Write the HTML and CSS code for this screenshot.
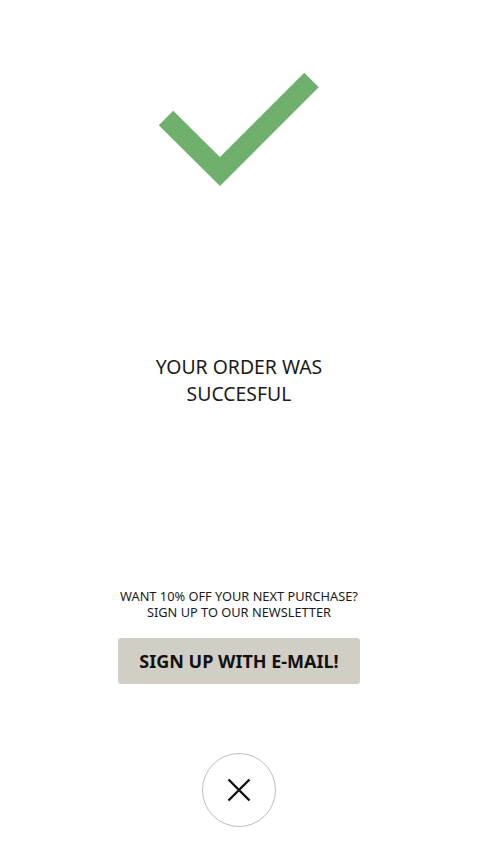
FILE: index.html
```html
<!DOCTYPE html>
<html>
<head>
<meta charset="utf-8">
<link rel="stylesheet" href="styles.css">
</head>
<body>
<main class="page">
  <svg class="check" width="162" height="116" viewBox="158 72 162 116">
    <polyline points="166,118 220,171.5 311.5,80" fill="none" stroke="#6fb06d" stroke-width="20.5" stroke-linecap="butt" stroke-linejoin="miter"/>
  </svg>
  <h1 class="title">YOUR ORDER WAS<br>SUCCESFUL</h1>
  <p class="promo">WANT 10% OFF YOUR NEXT PURCHASE?<br>SIGN UP TO OUR NEWSLETTER</p>
  <button class="signup">SIGN UP WITH E-MAIL!</button>
  <button class="close" aria-label="Close">
    <svg width="24" height="24" viewBox="0 0 24 24">
      <path d="M1.5 1.5 L22.5 22.5 M22.5 1.5 L1.5 22.5" stroke="#111" stroke-width="2.4" fill="none"/>
    </svg>
  </button>
</main>
</body>
</html>
```
FILE: styles.css
```css
html, body {
  margin: 0;
  padding: 0;
  background: #fff;
}
.page {
  display: flex;
  flex-direction: column;
  align-items: center;
  font-family: "Noto Sans", "Open Sans", sans-serif;
  color: #1a1a1a;
}
.check {
  display: block;
  margin-top: 72px;
}
.title {
  margin: 165px 0 0;
  font-size: 19.4px;
  font-weight: 400;
  line-height: 27px;
  text-align: center;
}
.promo {
  margin: 181px 0 0;
  font-size: 12.8px;
  line-height: 16px;
  text-align: center;
}
.signup {
  margin-top: 18px;
  width: 242px;
  height: 46px;
  border: none;
  border-radius: 3px;
  background: #d1cec5;
  font-family: "Noto Sans", "Open Sans", sans-serif;
  font-weight: 700;
  font-size: 18px;
  color: #111;
  padding: 0;
}
.close {
  margin-top: 69px;
  width: 74px;
  height: 74px;
  border: 1px solid #bdbdbd;
  border-radius: 50%;
  background: #fff;
  display: flex;
  align-items: center;
  justify-content: center;
  padding: 0;
}
.close svg {
  display: block;
}
```
